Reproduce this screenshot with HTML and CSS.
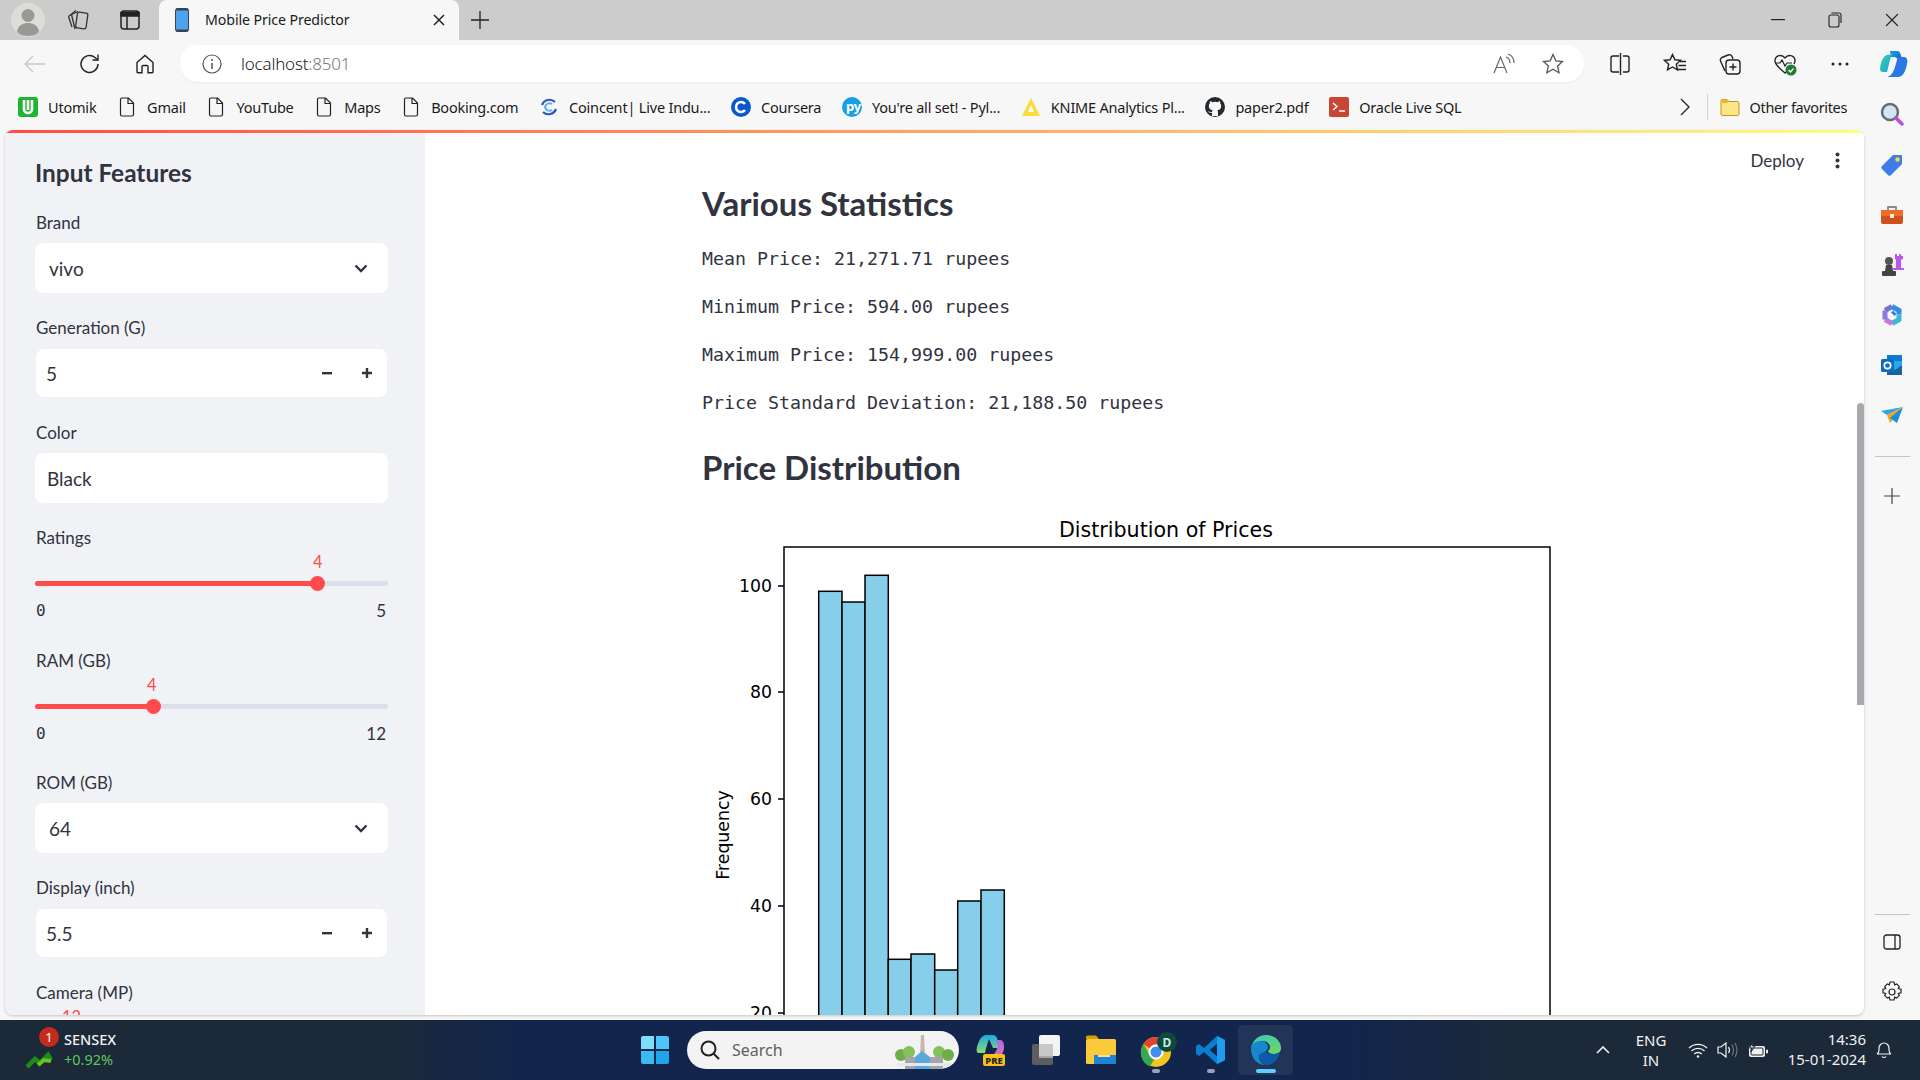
FILE: index.html
```html
<!DOCTYPE html>
<html lang="en">
<head>
<meta charset="utf-8">
<title>Mobile Price Predictor</title>
<link rel="stylesheet" href="styles.css">
</head>
<body>
<div class="tabstrip">
  <div class="ico w55"><svg width="34" height="34" viewBox="0 0 34 34"><circle cx="17" cy="17" r="17" fill="#dcdcd8"/><circle cx="17" cy="12.5" r="6.5" fill="#9a9892"/><path d="M6 29c1-7 6-9 11-9s10 2 11 9c-3 3-7 4-11 4s-8-1-11-4z" fill="#9a9892"/></svg></div>
  <div class="ico w45"><svg width="22" height="24" viewBox="0 0 22 24" fill="none" stroke="#333" stroke-width="1.300"><path d="M1.500 8.500L9 2.500"/><path d="M1.500 8.500L5 19"/><path d="M4.500 6.500L11 3.500"/><path d="M4.500 6.500L8 21"/><rect x="9.500" y="4.500" width="10.500" height="16" rx="2" transform="rotate(8 14.700 12.500)" fill="#ccc"/></svg></div>
  <div class="ico w59"><svg width="20" height="20" viewBox="0 0 20 20" fill="none" stroke="#222" stroke-width="1.500"><rect x="1" y="1" width="18" height="18" rx="3"/><path d="M1 2.500h18V6H1z" fill="#222"/><path d="M7 6v13"/></svg></div>
  <div class="tab">
    <svg class="tab-phone" width="14" height="24" viewBox="0 0 14 24"><rect x="0.500" y="0.500" width="13" height="23" rx="2" fill="#4da3ee" stroke="#3a4250"/><rect x="1" y="0.500" width="12" height="2" fill="#3a4250"/><rect x="1" y="21.500" width="12" height="2" fill="#3a4250"/></svg>
    <span class="tab-title">Mobile Price Predictor</span>
    <svg class="tab-close" width="12" height="12" viewBox="0 0 12 12" stroke="#222" stroke-width="1.500"><path d="M1 1l10 10M11 1L1 11"/></svg>
  </div>
  <div class="ico w42"><svg width="18" height="18" viewBox="0 0 18 18" stroke="#222" stroke-width="1.300"><path d="M9 0v18M0 9h18"/></svg></div>
  <div class="winctl">
    <div class="ico w57"><svg width="14" height="2" viewBox="0 0 14 2"><rect width="14" height="1.200" fill="#222"/></svg></div>
    <div class="ico w57"><svg width="14" height="16" viewBox="0 0 14 16" fill="none" stroke="#222" stroke-width="1.100"><rect x="1" y="3" width="10" height="12" rx="2"/><path d="M3.500 1H11a2 2 0 0 1 2 2v8"/></svg></div>
    <div class="ico w57"><svg width="14" height="14" viewBox="0 0 14 14" stroke="#222" stroke-width="1.100"><path d="M1 1l12 12M13 1L1 13"/></svg></div>
  </div>
</div>

<div class="toolbar">
  <div class="ico w55 first"><svg width="22" height="18" viewBox="0 0 22 18" fill="none" stroke="#c6c6c6" stroke-width="1.300"><path d="M21 9H1M9 1L1 9l8 8"/></svg></div>
  <div class="ico w55"><svg width="22" height="22" viewBox="0 0 22 22" fill="none" stroke="#222" stroke-width="1.400"><path d="M19 11a8.500 8.500 0 1 1-3-6.500L19 7"/><path d="M19 1.500V7h-5.500"/></svg></div>
  <div class="ico w55"><svg width="20" height="20" viewBox="0 0 20 20" fill="none" stroke="#222" stroke-width="1.400"><path d="M2 8.500L10 1.500l8 7V18a.800.800 0 0 1-.8.800H13V12.500a1 1 0 0 0-1-1H8a1 1 0 0 0-1 1v6.300H2.800A.800.800 0 0 1 2 18z"/></svg></div>
  <div class="omnibox">
    <svg class="omni-info" width="20" height="20" viewBox="0 0 20 20" fill="none" stroke="#555" stroke-width="1.200"><circle cx="10" cy="10" r="9"/><path d="M10 9v6" stroke-width="1.500"/><circle cx="10" cy="6" r="1" fill="#555" stroke="none"/></svg>
    <span class="url">localhost<span class="url-port">:8501</span></span>
    <svg class="omni-read" width="22" height="22" viewBox="0 0 22 22" fill="none" stroke="#666" stroke-width="1.200"><path d="M1 20L7.500 4 14 20M3.500 14.500h8"/><path d="M13 4q4 1 4 6M15 1q6 2 6 9"/></svg>
    <svg class="omni-star" width="22" height="22" viewBox="0 0 22 22" fill="none" stroke="#555" stroke-width="1.300"><path d="M11 1.500l2.900 6.300 6.600.7-4.900 4.500 1.400 6.700L11 16.300 4.900 19.700l1.500-6.700L1.500 8.500l6.600-.7z"/></svg>
  </div>
  <div class="ico w55 split"><svg width="22" height="22" viewBox="0 0 22 22" fill="none" stroke="#222" stroke-width="1.400"><path d="M10 3H4a2 2 0 0 0-2 2v12a2 2 0 0 0 2 2h6M14 3h4a2 2 0 0 1 2 2v12a2 2 0 0 1-2 2h-4M11.500 0v22"/></svg></div>
  <div class="ico w55"><svg width="24" height="22" viewBox="0 0 24 22" fill="none" stroke="#222" stroke-width="1.400"><path d="M9.500 1.500l2.400 5.300 5.600.6-4.200 3.800 1.200 5.700-5-2.900-5 2.900 1.200-5.700L1.500 7.400l5.600-.6z"/><path d="M17 8.500h6M15.500 12.500h7.500M15 16.500h8"/></svg></div>
  <div class="ico w55"><svg width="24" height="24" viewBox="0 0 24 24" fill="none" stroke="#222" stroke-width="1.400"><rect x="8" y="8" width="14" height="14" rx="3"/><path d="M15 11.500v7M11.500 15h7"/><path d="M7 19L2.500 9A3 3 0 0 1 4 5.500l6-2.500a3 3 0 0 1 4 1.500L15 7"/></svg></div>
  <div class="ico w55"><svg width="24" height="24" viewBox="0 0 24 24" fill="none"><path d="M12 6c-3-4-9-3-10 2-1 4 5 9 10 13 1-1 2-1.500 3-2.500M12 6c3-4 9-3 10 2 .2 1-.2 2.500-1 4" stroke="#222" stroke-width="1.400"/><path d="M2 11h5l2-3 3 6 2-3h5" stroke="#222" stroke-width="1.200"/><circle cx="18" cy="18" r="5.500" fill="#1f7a34"/><path d="M15.500 18l2 2 3-3.500" stroke="#fff" stroke-width="1.300"/></svg></div>
  <div class="ico w55"><svg width="18" height="4" viewBox="0 0 18 4" fill="#222"><circle cx="2" cy="2" r="1.500"/><circle cx="9" cy="2" r="1.500"/><circle cx="16" cy="2" r="1.500"/></svg></div>
  <div class="ico w52"><svg width="30" height="28" viewBox="0 0 30 28"><defs><linearGradient id="cpa" x1="0" y1="0" x2="1" y2="1"><stop offset="0" stop-color="#1b9de2"/><stop offset="1" stop-color="#0b4fc4"/></linearGradient><linearGradient id="cpb" x1="0" y1="0" x2="1" y2="1"><stop offset="0" stop-color="#34d2a0"/><stop offset="1" stop-color="#18a0e8"/></linearGradient></defs><path d="M12 1h7c2 0 3 1 3.500 3L26 14c1 4-1 8-4 8l-2-11c-.5-3-2-4-4-4h-3z" fill="url(#cpa)"/><path d="M9 5C6 6 4 9 3 13c-1 5-2 9 2 9h4l3-12c.5-3 2-5 3-6z" fill="url(#cpb)"/><path d="M24 7h2c3 0 4 3 3 7-1 5-3 12-8 13H9c4-1 6-4 8-10l2-7c.5-2 2-3 5-3z" fill="#2a78e4"/></svg></div>
</div>

<div class="workspace">
  <div class="center-col">
    <div class="bookmarks">
      <div class="bm"><svg class="bm-ico" width="20" height="20" viewBox="0 0 20 20"><rect width="20" height="20" rx="3" fill="#1db52f"/><path d="M6 3v9a4 4 0 0 0 8 0V3M10 3v10" fill="none" stroke="#fff" stroke-width="2.600"/></svg><span>Utomik</span></div>
      <div class="bm"><svg class="bm-ico" width="20" height="20" viewBox="0 0 20 20"><use href="#doc"/></svg><span>Gmail</span></div>
      <div class="bm"><svg class="bm-ico" width="20" height="20" viewBox="0 0 20 20"><use href="#doc"/></svg><span>YouTube</span></div>
      <div class="bm"><svg class="bm-ico" width="20" height="20" viewBox="0 0 20 20"><use href="#doc"/></svg><span>Maps</span></div>
      <div class="bm"><svg class="bm-ico" width="20" height="20" viewBox="0 0 20 20"><use href="#doc"/></svg><span>Booking.com</span></div>
      <div class="bm"><svg class="bm-ico" width="20" height="20" viewBox="0 0 20 20" fill="none"><path d="M16 5A8 8 0 0 0 3 8" stroke="#2a56c6" stroke-width="2.200"/><path d="M4 15a8 8 0 0 0 13-3" stroke="#2a56c6" stroke-width="2.200"/><path d="M13 7a4.500 4.500 0 0 0-7 3 4.500 4.500 0 0 0 7 3" stroke="#5fb0e8" stroke-width="2"/></svg><span>Coincent| Live Indu...</span></div>
      <div class="bm"><svg class="bm-ico" width="20" height="20" viewBox="0 0 20 20" fill="none"><circle cx="10" cy="10" r="10" fill="#0a56d2"/><path d="M14 7a5 5 0 1 0 0 6" stroke="#fff" stroke-width="2.600"/></svg><span>Coursera</span></div>
      <div class="bm"><svg class="bm-ico" width="20" height="20" viewBox="0 0 20 20"><circle cx="10" cy="10" r="10" fill="#1a9fe6"/><text x="4" y="14" class="bm-py">py</text></svg><span>You're all set! - Pyl...</span></div>
      <div class="bm"><svg class="bm-ico" width="20" height="20" viewBox="0 0 20 20"><path d="M10 1l9 18H1z" fill="#fbdc3c"/><path d="M10 8l3 7H7z" fill="#fff"/></svg><span>KNIME Analytics Pl...</span></div>
      <div class="bm"><svg class="bm-ico" width="20" height="20" viewBox="0 0 20 20"><circle cx="10" cy="10" r="10" fill="#24292e"/><path d="M7 19v-3c-3 .6-3.500-1.500-4-2 1 0 1.500 1 2.500 1.200.5 0 1 0 1.500-.2 0-1 .3-1.300.7-1.700C5 13 3.800 11.500 3.800 9c0-1 .4-1.900 1-2.500-.2-.6-.2-1.500.2-2.300 1 0 1.800.5 2.400 1a8 8 0 0 1 5.200 0c.6-.5 1.400-1 2.400-1 .4.800.4 1.700.2 2.300.6.600 1 1.500 1 2.500 0 2.500-1.200 4-3.900 4.300.5.400.7 1 .7 2v3.700z" fill="#f7f7f7"/></svg><span>paper2.pdf</span></div>
      <div class="bm"><svg class="bm-ico" width="20" height="20" viewBox="0 0 20 20" fill="none"><rect width="20" height="20" rx="2" fill="#c74634"/><path d="M4 6l4 3.500L4 13" stroke="#fff" stroke-width="1.500"/><path d="M10 14h6" stroke="#fff" stroke-width="1.500"/></svg><span>Oracle Live SQL</span></div>
      <div class="bm-right">
        <svg width="10" height="18" viewBox="0 0 10 18" fill="none" stroke="#222" stroke-width="1.300"><path d="M1 1l8 8-8 8"/></svg>
        <i class="bm-sep"></i>
        <div class="bm bm-other"><svg class="bm-ico" width="20" height="20" viewBox="0 0 20 20"><path d="M1 4a1.500 1.500 0 0 1 1.500-1.500H7L9 4.500h8.500A1.500 1.500 0 0 1 19 6v11a1.500 1.500 0 0 1-1.500 1.500h-15A1.500 1.500 0 0 1 1 17z" fill="#fde58a" stroke="#c4931c"/><path d="M1 4a1.500 1.500 0 0 1 1.500-1.500H7L9 4.500 7 6H1z" fill="#eab530"/></svg><span>Other favorites</span></div>
      </div>
    </div>

    <div class="page">
      <div class="rainbow"></div>
      <div class="app">
        <aside class="sidebar">
          <h2 class="side-title">Input Features</h2>
          <div class="field first-field">
            <div class="lbl">Brand</div>
            <div class="select"><span>vivo</span><svg width="14" height="9" viewBox="0 0 14 9" fill="none" stroke="#31333f" stroke-width="2.400"><path d="M1.500 1.500L7 7l5.500-5.500"/></svg></div>
          </div>
          <div class="field">
            <div class="lbl">Generation (G)</div>
            <div class="number"><span class="num-val">5</span><svg class="minus" width="10" height="3" viewBox="0 0 10 3"><rect width="10" height="2.400" fill="#31333f"/></svg><svg class="plus" width="10" height="10" viewBox="0 0 10 10"><path d="M0 5h10M5 0v10" stroke="#31333f" stroke-width="2.400"/></svg></div>
          </div>
          <div class="field">
            <div class="lbl">Color</div>
            <div class="textin">Black</div>
          </div>
          <div class="field slider">
            <div class="lbl">Ratings</div>
            <div class="sl-val val-rate">4</div>
            <div class="track"><div class="fill fill-rate"></div><div class="thumb thumb-rate"></div></div>
            <div class="sl-ends"><span class="mono0">0</span><span>5</span></div>
          </div>
          <div class="field slider">
            <div class="lbl">RAM (GB)</div>
            <div class="sl-val val-ram">4</div>
            <div class="track"><div class="fill fill-ram"></div><div class="thumb thumb-ram"></div></div>
            <div class="sl-ends"><span class="mono0">0</span><span>12</span></div>
          </div>
          <div class="field after-slider">
            <div class="lbl">ROM (GB)</div>
            <div class="select"><span>64</span><svg width="14" height="9" viewBox="0 0 14 9" fill="none" stroke="#31333f" stroke-width="2.400"><path d="M1.500 1.500L7 7l5.500-5.500"/></svg></div>
          </div>
          <div class="field">
            <div class="lbl">Display (inch)</div>
            <div class="number"><span class="num-val">5.5</span><svg class="minus" width="10" height="3" viewBox="0 0 10 3"><rect width="10" height="2.400" fill="#31333f"/></svg><svg class="plus" width="10" height="10" viewBox="0 0 10 10"><path d="M0 5h10M5 0v10" stroke="#31333f" stroke-width="2.400"/></svg></div>
          </div>
          <div class="field slider">
            <div class="lbl">Camera (MP)</div>
            <div class="sl-val val-cam">12</div>
          </div>
        </aside>
        <main class="main">
          <h3 class="h-stat">Various Statistics</h3>
          <p class="stat first-stat">Mean Price: 21,271.71 rupees</p>
          <p class="stat">Minimum Price: 594.00 rupees</p>
          <p class="stat">Maximum Price: 154,999.00 rupees</p>
          <p class="stat">Price Standard Deviation: 21,188.50 rupees</p>
          <h3 class="h-dist">Price Distribution</h3>
          <svg class="chart" width="860" height="620" viewBox="0 0 860 620">
            <text x="464" y="27" class="c-title">Distribution of Prices</text>
            <rect x="82" y="37" width="766" height="640" fill="#fff" stroke="#000" stroke-width="1.500"/>
            <g fill="#87ceeb" stroke="#000" stroke-width="1.500">
              <rect x="116.700" y="81.300" width="23.300" height="560"/>
              <rect x="140" y="92" width="23" height="560"/>
              <rect x="163" y="65.300" width="23.300" height="560"/>
              <rect x="186.300" y="449.300" width="22.700" height="200"/>
              <rect x="209" y="444" width="23.700" height="200"/>
              <rect x="232.700" y="460" width="23" height="200"/>
              <rect x="255.700" y="391" width="23.300" height="200"/>
              <rect x="279" y="380" width="23.300" height="200"/>
            </g>
            <g stroke="#000" stroke-width="1.300">
              <path d="M76 76h6M76 182h6M76 289h6M76 396h6M76 503h6"/>
            </g>
            <text x="70" y="82" class="c-tick">100</text>
            <text x="70" y="188" class="c-tick">80</text>
            <text x="70" y="295" class="c-tick">60</text>
            <text x="70" y="402" class="c-tick">40</text>
            <text x="70" y="509" class="c-tick">20</text>
            <text x="0" y="0" class="c-ylabel" transform="translate(27 325) rotate(-90)">Frequency</text>
          </svg>
        </main>
        <div class="deploybar"><span class="deploy">Deploy</span><svg width="5" height="17" viewBox="0 0 5 17" fill="#31333f"><circle cx="2.500" cy="2.500" r="2"/><circle cx="2.500" cy="8.500" r="2"/><circle cx="2.500" cy="14.500" r="2"/></svg></div>
        <div class="scrollthumb"></div>
      </div>
    </div>
  </div>

  <div class="edgebar">
    <div class="ico e50"><svg width="24" height="26" viewBox="0 0 24 26"><circle cx="10" cy="10" r="8" fill="#cfe6f8" stroke="#6b6b6b" stroke-width="2.500"/><path d="M16 16l6 6" stroke="#c04ae0" stroke-width="3.500" stroke-linecap="round"/></svg></div>
    <div class="ico e50"><svg width="24" height="24" viewBox="0 0 24 24"><path d="M13 2h8a1 1 0 0 1 1 1v8L11 22a2 2 0 0 1-3 0l-6-6a2 2 0 0 1 0-3z" fill="#3e7ce8"/><circle cx="17.500" cy="6.500" r="2.200" fill="#fbd34a"/></svg></div>
    <div class="ico e50"><svg width="24" height="20" viewBox="0 0 24 20"><path d="M8 5V2h8v3" fill="none" stroke="#8a8a8a" stroke-width="1.800"/><rect x="1" y="5" width="22" height="14" rx="2" fill="#d0501c"/><rect x="1" y="5" width="22" height="6" fill="#ee6d2c"/><rect x="10" y="9" width="4" height="4" fill="#e8e8e8"/></svg></div>
    <div class="ico e50"><svg width="24" height="24" viewBox="0 0 24 24"><circle cx="9" cy="8" r="4" fill="#555"/><path d="M6 12h6l1 6H5z" fill="#444"/><rect x="2" y="18" width="14" height="5" rx="1" fill="#444"/><path d="M15 1h2v2h2V1h2v2h2v3l-2 1v8h3v2H13v-2h3V7l-1-1z" fill="#bb55f0"/></svg></div>
    <div class="ico e50"><svg width="22" height="24" viewBox="0 0 22 24" fill="none" stroke-width="5"><path d="M4 7.500L11 3.500" stroke="#7a6fdc"/><path d="M11 3.500l7 4v4" stroke="#2f8fe0"/><path d="M18 11.500v5l-7 4" stroke="#38b8d8"/><path d="M11 20.500l-7-4" stroke="#c57ad6"/><path d="M4 16.500v-9" stroke="#8b7bdc"/><path d="M11 8.500l3.500 3.500" stroke="#3a7fd8" stroke-width="3"/></svg></div>
    <div class="ico e50"><svg width="22" height="22" viewBox="0 0 22 22"><rect x="6" y="1" width="15" height="20" rx="1" fill="#28a8ea"/><rect x="6" y="1" width="15" height="6" fill="#0f78d4"/><path d="M6 11l8 5 7-5v10H6z" fill="#14447d" opacity=".7"/><rect x="0" y="5" width="13" height="13" rx="1.500" fill="#0f6cbd"/><circle cx="6.500" cy="11.500" r="3.200" fill="none" stroke="#fff" stroke-width="1.700"/></svg></div>
    <div class="ico e50"><svg width="24" height="18" viewBox="0 0 24 18"><path d="M1 5L23 1 7 9z" fill="#2ea3ee"/><path d="M23 1L7 9l3 8z" fill="#f3a31f"/><path d="M23 1l-6 16-7-5z" fill="#1a8de0"/></svg></div>
    <i class="edge-sep"></i>
    <div class="ico e50 edge-plus"><svg width="16" height="16" viewBox="0 0 16 16" stroke="#444" stroke-width="1.200"><path d="M8 0v16M0 8h16"/></svg></div>
    <i class="edge-sep edge-sep-bottom"></i>
    <div class="ico e50"><svg width="18" height="16" viewBox="0 0 18 16" fill="none" stroke="#222" stroke-width="1.300"><rect x="1" y="1" width="16" height="14" rx="2.500"/><path d="M12 1v14"/></svg></div>
    <div class="ico e50"><svg width="22" height="22" viewBox="0 0 22 22" fill="none" stroke="#222" stroke-width="1.200"><path d="M9 1h4l.7 2.800 2-.9 2.600 2.600-1 2.100 2.700.6v3.600l-2.700.7 1 2-2.600 2.600-2-1-.7 2.900H9l-.7-2.900-2 1-2.600-2.600 1-2-2.700-.7V8.200l2.700-.6-1-2.100 2.600-2.600 2 .9z"/><circle cx="11" cy="11" r="3"/></svg></div>
  </div>
</div>

<div class="taskbar">
  <div class="tb-left">
    <div class="widget-ico">
      <svg width="30" height="24" viewBox="0 0 30 24"><path d="M1 22l8-8 5 4 8-8 3 5" fill="none" stroke="#1c8c1c" stroke-width="4.500"/><path d="M12 20l6-5 7 1" fill="none" stroke="#6bc21e" stroke-width="4"/></svg>
      <span class="widget-badge">1</span>
    </div>
    <div class="widget-text"><span class="w-name">SENSEX</span><span class="w-chg">+0.92%</span></div>
  </div>
  <div class="tb-btn"><svg width="30" height="30" viewBox="0 0 30 30"><path d="M3 1h11v13H1V3a2 2 0 0 1 2-2z" fill="#7fdcfb"/><path d="M16 1h11a2 2 0 0 1 2 2v11H16z" fill="#4ec5f7"/><path d="M1 16h13v13H3a2 2 0 0 1-2-2z" fill="#3cb8f2"/><path d="M16 16h13v11a2 2 0 0 1-2 2H16z" fill="#20a4ec"/></svg></div>
  <div class="searchbox">
    <svg width="20" height="20" viewBox="0 0 20 20" fill="none" stroke="#222" stroke-width="2"><circle cx="8.500" cy="8.500" r="7"/><path d="M13.500 13.500l5.500 5.500"/></svg>
    <span class="search-txt">Search</span>
    <svg class="search-art" width="62" height="34" viewBox="0 0 62 34"><path d="M28 0h3l1 22h-5z" fill="#c9b4a8"/><circle cx="8" cy="20" r="6" fill="#6cae4a"/><circle cx="16" cy="17" r="6" fill="#84c060"/><circle cx="46" cy="17" r="6" fill="#84c060"/><circle cx="55" cy="20" r="6" fill="#6cae4a"/><path d="M12 22h14v12H12zM36 22h14v12H36z" fill="#a9a3ad"/><path d="M22 22l7-6 8 6v12H22z" fill="#5ba8dc"/><path d="M4 28h54v3H4z" fill="#e4e8e8"/></svg>
  </div>
  <div class="tb-btn"><svg width="30" height="34" viewBox="0 0 30 34"><defs><linearGradient id="cpc" x1="0" y1="0" x2="0" y2="1"><stop offset="0" stop-color="#1ea7e8"/><stop offset="1" stop-color="#8edc6a"/></linearGradient><linearGradient id="cpd" x1="0" y1="0" x2="1" y2="1"><stop offset="0" stop-color="#8d6ef0"/><stop offset="1" stop-color="#f06ac0"/></linearGradient></defs><path d="M10 2h7c2 0 3 1 4 3l3 10h-7L13 6c-1 3-3 8-4 14H3C1 20 0 18 1 14 3 7 5 3 10 2z" fill="url(#cpc)"/><path d="M20 7h4c3 0 4 3 4 7 0 5-2 8-5 9h-7c3-2 5-7 6-10z" fill="url(#cpd)"/><rect x="7" y="21" width="22" height="12" rx="2" fill="#f8c218"/><text x="18" y="31" class="pre">PRE</text></svg></div>
  <div class="tb-btn"><svg width="30" height="32" viewBox="0 0 30 32"><rect x="1" y="10" width="21" height="21" rx="2" fill="#5d5d5d"/><rect x="8" y="10" width="14" height="14" fill="#a9a9a9"/><rect x="8" y="1" width="21" height="21" rx="2" fill="#f4f4f4"/><rect x="8" y="10" width="14" height="12" fill="#c8c8c8"/></svg></div>
  <div class="tb-btn"><svg width="32" height="30" viewBox="0 0 32 30"><path d="M1 2a1.500 1.500 0 0 1 1.500-1.500H11L14 4H1z" fill="#d9a000"/><rect x="1" y="4" width="30" height="25" rx="1.500" fill="#fbca3a"/><rect x="9" y="20" width="22" height="9" fill="#1e85d6"/><rect x="13" y="20" width="12" height="2" fill="#fbe08a"/></svg></div>
  <div class="tb-btn running"><svg width="42" height="38" viewBox="-6 0 42 38"><circle cx="15" cy="21" r="15" fill="#f3c51f"/><path d="M15 6a15 15 0 0 1 13 7.500H15a7.500 7.500 0 0 0-6.500 3.800L2.500 13A15 15 0 0 1 15 6z" fill="#e14434"/><path d="M2.500 13l6.500 11.500a7.500 7.500 0 0 0 4 4L9 35.500A15 15 0 0 1 2.500 13z" fill="#35a853"/><circle cx="15" cy="21" r="6.500" fill="#3f8ef0" stroke="#fff" stroke-width="2"/><circle cx="26" cy="11" r="10" fill="#0c4a3e"/><text x="26" y="15.500" class="dbadge">D</text></svg></div>
  <div class="tb-btn running"><svg width="30" height="30" viewBox="0 0 30 30"><path d="M21 1l8 4v20l-8 4L8 17l-5 4-3-2v-8l3-2 5 4zM21 9l-7 6 7 6z" fill="#0a7fd0" fill-rule="evenodd"/><path d="M21 1l8 4v20l-8 4z" fill="#1f9cf0"/><path d="M21 9l-7 6 7 6z" fill="#12264b"/></svg></div>
  <div class="tb-btn active"><svg width="32" height="32" viewBox="0 0 32 32"><defs><linearGradient id="edg" x1="0" y1="0" x2="1" y2="1"><stop offset="0" stop-color="#36c5c0"/><stop offset="1" stop-color="#6edc5a"/></linearGradient></defs><path d="M16 1c9 0 15 6 15 13 0 4-3 6-7 6-3 0-6-1-6-3 1-1 2-2 2-4 0-3-3-6-8-6-5 0-9 3-11 8C2 7 8 1 16 1z" fill="url(#edg)"/><path d="M1 15c0-4 4-8 9-8 5 0 8 3 8 6 0 2-1 3-2 4-2 2-6 2-7 5-.5 3 1 7 6 9C7 31 1 24 1 15z" fill="#1787cf"/><path d="M9 22c1-3 5-3 7-5 0 3 3 3 6 3 3 0 6-.5 8-2-1 7-7 13-14 13-5-2-8-5-7-9z" fill="#0f5aa8"/></svg></div>
  <div class="tray">
    <div class="ico t-chev"><svg width="14" height="8" viewBox="0 0 14 8" fill="none" stroke="#f2f2f2" stroke-width="1.600"><path d="M1 7l6-6 6 6"/></svg></div>
    <div class="t-lang"><span>ENG</span><span>IN</span></div>
    <div class="ico t-wifi"><svg width="20" height="15" viewBox="0 0 20 15" fill="none" stroke="#f2f2f2" stroke-width="1.300"><path d="M1 5a13 13 0 0 1 18 0M3.500 8a9.500 9.500 0 0 1 13 0M6.200 11a5.500 5.500 0 0 1 7.600 0"/><circle cx="10" cy="13.500" r="1.200" fill="#f2f2f2" stroke="none"/></svg></div>
    <div class="ico t-vol"><svg width="21" height="16" viewBox="0 0 21 16" fill="none" stroke="#f2f2f2" stroke-width="1.200"><path d="M1 5h3l5-4v14l-5-4H1z"/><path d="M11.500 5q2 3 0 6"/><path d="M15 2.500q3 5.500 0 11M18 1q4 7 0 14" stroke="#6c7480"/></svg></div>
    <div class="ico t-bat"><svg width="20" height="16" viewBox="0 0 20 16"><rect x="1" y="4" width="16" height="11" rx="2" fill="#f2f2f2"/><rect x="18" y="7.500" width="2" height="4" rx="1" fill="#f2f2f2"/><path d="M5 0L1.500 6H4l-1 4 4-6H4.500z" fill="#f2f2f2" stroke="#1c2938"/><rect x="3" y="6" width="12" height="7" rx="1" fill="none" stroke="#1c2938"/></svg></div>
    <div class="t-clock"><span>14:36</span><span>15-01-2024</span></div>
    <div class="ico t-bell"><svg width="16" height="18" viewBox="0 0 16 18" fill="none" stroke="#f2f2f2" stroke-width="1.200"><path d="M1 13q2-1 2-4V7a5 5 0 0 1 10 0v2q0 3 2 4z"/><path d="M6 15.500a2.500 2.500 0 0 0 4 0"/></svg></div>
  </div>
</div>

<svg class="defs" width="0" height="0"><defs><symbol id="doc" viewBox="0 0 20 20"><path d="M3.500 2.500A1.500 1.500 0 0 1 5 1h6.500L16.500 6v11.500A1.500 1.500 0 0 1 15 19H5a1.500 1.500 0 0 1-1.500-1.500zM11 1v5.500h5.500" fill="none" stroke="#222" stroke-width="1.200"/></symbol></defs></svg>
</body>
</html>
```

FILE: styles.css
```css
* { box-sizing: border-box; }
html, body { margin: 0; padding: 0; }
body { width: 1920px; height: 1080px; overflow: hidden; display: flex; flex-direction: column; background: #f7f7f7; font-family: "Noto Sans", sans-serif; color: #1a1a1a; }

.ico { display: flex; align-items: center; justify-content: center; flex: none; }
.w55 { width: 55px; } .w45 { width: 45px; } .w59 { width: 59px; } .w42 { width: 42px; } .w57 { width: 57px; } .w52 { width: 52px; }
.defs { position: absolute; }

.tabstrip { height: 40px; flex: none; background: #cccccc; display: flex; align-items: center; }
.tab { width: 300px; height: 40px; background: #f7f7f7; border-radius: 8px 8px 0 0; display: flex; align-items: center; padding-left: 16px; padding-right: 14px; font-size: 14.2px; }
.tab-phone { margin-right: 16px; }
.tab-title { letter-spacing: -0.1px; padding-bottom: 2px; }
.tab-close { margin-left: auto; }
.winctl { margin-left: auto; display: flex; }

.toolbar { height: 42px; flex: none; display: flex; align-items: flex-start; padding-top: 5px; }
.toolbar > .ico { height: 37px; }
.first { margin-left: 7px; }
.omnibox { width: 1404px; height: 37px; margin-left: 8px; background: #fff; border-radius: 18px; display: flex; align-items: center; padding-left: 22px; padding-right: 20px; box-shadow: 0 1px 2px rgba(0,0,0,.05); font-size: 17px; }
.omni-info { margin-right: 19px; }
.url { color: #1a1a1a; letter-spacing: -0.2px; font-weight: 300; }
.url-port { color: #767676; }
.omni-read { margin-left: auto; margin-right: 27px; }
.split { margin-left: 8px; }

.workspace { flex: 1; display: flex; min-height: 0; }
.center-col { width: 1864px; display: flex; flex-direction: column; }

.bookmarks { height: 48px; flex: none; display: flex; align-items: center; gap: 20.6px; padding: 2px 17px 0 18px; font-size: 14.5px; }
.bm { display: flex; align-items: center; gap: 10px; white-space: nowrap; letter-spacing: -0.2px; }
.bm-ico { flex: none; }
.bm-py { font-size: 13px; font-weight: 700; fill: #fff; font-family: "Noto Sans", sans-serif; }
.bm-right { margin-left: auto; display: flex; align-items: center; gap: 17px; }
.bm-other { margin-left: -5px; letter-spacing: -0.36px; }
.bm-sep { width: 1px; height: 26px; background: #d0d0d0; }

.page { flex: 1; min-height: 0; margin-left: 5px; margin-bottom: 5px; background: #fff; border-radius: 8px; overflow: hidden; display: flex; flex-direction: column; box-shadow: 0 1px 3px rgba(0,0,0,.2); }
.rainbow { height: 3px; flex: none; background: linear-gradient(90deg, #ff4b4b, #fffd80); }
.app { flex: 1; min-height: 0; display: flex; position: relative; }

.sidebar { width: 420px; flex: none; background: #f0f2f6; padding: 20px 37px 0 30px; overflow: hidden; font-family: Lato, sans-serif; color: #31333f; }
.side-title { margin: 0; font-size: 24.4px; line-height: 40px; font-weight: 700; }
.field { margin-top: 25px; }
.first-field { margin-top: 20px; }
.slider + .slider { margin-top: 30px; }
.after-slider { margin-top: 29px; }
.lbl { font-size: 17px; line-height: 20px; margin-bottom: 10px; padding-left: 1px; }
.select, .textin { height: 50px; background: #fff; border-radius: 8px; display: flex; align-items: center; font-size: 19px; }
.select { justify-content: space-between; padding: 0 20px 0 14px; }
.textin { padding-left: 12px; }
.number { height: 50px; border: 1px solid #f0f2f6; background: #fff; border-radius: 9px; display: flex; align-items: center; font-size: 19px; padding-left: 10px; }
.num-val { flex: 1; }
.minus { margin-right: 30px; }
.plus { margin-right: 15px; }

.slider .lbl { margin-bottom: 4px; }
.sl-val { height: 20px; line-height: 20px; font-size: 16.5px; color: #ff4b4b; }
.val-rate { padding-left: 278px; }
.val-ram { padding-left: 112px; }
.val-cam { padding-left: 27px; }
.track { position: relative; height: 5px; margin: 8.5px 0 15.5px; background: #dcdee9; border-radius: 3px; }
.fill { height: 5px; background: #ff4b4b; border-radius: 3px; }
.fill-rate { width: 282px; }
.fill-ram { width: 118px; }
.thumb-rate { left: 274.500px; }
.thumb-ram { left: 110.500px; }
.thumb { position: absolute; top: -5px; width: 15px; height: 15px; border-radius: 50%; background: #ff4b4b; }
.sl-ends { display: flex; justify-content: space-between; align-items: center; height: 20px; line-height: 20px; font-size: 17px; padding: 0 2px 0 1px; }
.mono0 { font-family: "DejaVu Sans Mono", monospace; font-size: 16px; }

.main { flex: 1; min-width: 0; padding: 48px 0 0 277px; font-family: Lato, sans-serif; color: #31333f; overflow: hidden; }
.h-stat, .h-dist { margin: 0; font-size: 33px; line-height: 44px; font-weight: 700; }
.h-dist { margin-top: 30px; }
.stat { margin: 24px 0 0; font-family: "DejaVu Sans Mono", monospace; font-size: 18.3px; line-height: 24px; }
.first-stat { margin-top: 22px; }
.chart { display: block; margin-top: 21px; }
.chart text { font-family: "DejaVu Sans", sans-serif; fill: #000; }
.c-title { font-size: 20.6px; text-anchor: middle; }
.c-tick { font-size: 17.3px; text-anchor: end; }
.c-ylabel { font-size: 17.3px; text-anchor: middle; }

.deploybar { position: absolute; top: 14px; right: 24px; height: 27px; display: flex; align-items: center; gap: 31px; font-family: Lato, sans-serif; color: #31333f; font-size: 17px; }
.scrollthumb { position: absolute; top: 270px; right: 0; width: 7px; height: 302px; background: #a9a9ad; border-radius: 4px 4px 0 0; }

.edgebar { width: 56px; flex: none; display: flex; flex-direction: column; padding: 8px 0 3px; align-items: center; }
.e50 { width: 56px; height: 50px; }
.edge-sep { display: block; width: 35px; height: 1px; background: #c4c4c4; margin-top: 16px; }
.edge-plus { margin-top: 14px; }
.edge-sep-bottom { margin-top: auto; margin-bottom: 2px; }

.taskbar { height: 60px; flex: none; display: flex; align-items: center; background: linear-gradient(90deg, #1c2938 0, #1c2938 20%, #12254c 27%, #12254c 70%, #1c2938 80%); color: #f2f2f2; }
.tb-left { width: 627px; flex: none; display: flex; align-items: center; padding-left: 26px; }
.widget-ico { position: relative; width: 38px; height: 30px; }
.widget-ico svg { position: absolute; left: 0; bottom: -4px; }
.widget-badge { position: absolute; left: 13px; top: -8px; width: 20px; height: 20px; border-radius: 50%; background: #c42b1c; color: #fff; font-size: 13px; line-height: 20px; text-align: center; }
.widget-text { display: flex; flex-direction: column; font-size: 14.5px; line-height: 20px; padding-bottom: 2px; }
.w-name { font-weight: 500; }
.w-chg { color: #5cc65c; }
.tb-btn { position: relative; width: 55px; height: 50px; flex: none; display: flex; align-items: center; justify-content: center; border-radius: 5px; }
.running::after, .active::after { content: ""; position: absolute; left: 50%; bottom: 2px; transform: translateX(-50%); width: 8px; height: 4px; border-radius: 2px; background: #9aa4b0; }
.active { background: rgba(255,255,255,.07); }
.active::after { width: 20px; background: #60cdff; }
.searchbox { width: 272px; height: 38px; flex: none; margin: 0 4px 0 5px; background: #f3f3f3; border-radius: 19px; display: flex; align-items: center; padding-left: 13px; color: #5f5f5f; font-size: 16px; overflow: hidden; }
.search-txt { margin-left: 12px; }
.search-art { margin-left: auto; margin-right: 4px; margin-top: 4px; }
.pre { font-family: "Noto Sans", sans-serif; font-size: 9.500px; font-weight: 800; text-anchor: middle; fill: #222; }
.dbadge { font-family: "Noto Sans", sans-serif; font-size: 12px; font-weight: 700; text-anchor: middle; fill: #cfe8dc; }
.tray { margin-left: auto; display: flex; align-items: center; padding-right: 18px; font-size: 15px; line-height: 20px; }
.t-chev { width: 48px; }
.t-lang { width: 48px; margin-right: 6px; display: flex; flex-direction: column; align-items: center; }
.t-wifi { width: 34px; } .t-vol { width: 24px; } .t-bat { width: 38px; }
.t-clock { width: 89px; display: flex; flex-direction: column; align-items: flex-end; padding-bottom: 2px; }
.t-bell { width: 36px; }
```
